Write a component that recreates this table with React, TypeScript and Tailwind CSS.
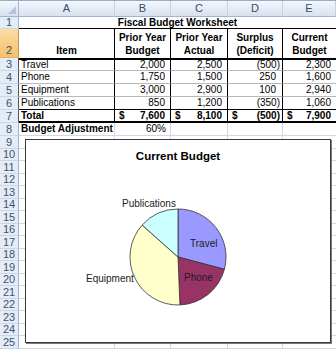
import React from "react";

const font = "font-['Liberation_Sans',Arial,sans-serif]";
const gridCols = "grid grid-cols-[19px_96px_56px_57px_55px_53px]";
const gridLine = "border-r border-b border-[#d0d7e5]";

const items = [
  ["Travel", "2,000", "2,500", "(500)", "2,300"],
  ["Phone", "1,750", "1,500", "250", "1,600"],
  ["Equipment", "3,000", "2,900", "100", "2,940"],
  ["Publications", "850", "1,200", "(350)", "1,060"],
];

const slices = [
  { name: "Travel", v: 2300, fill: "#9999ff" },
  { name: "Phone", v: 1600, fill: "#993366" },
  { name: "Equipment", v: 2940, fill: "#ffffcc" },
  { name: "Publications", v: 1060, fill: "#ccffff" },
];

function RowHead({ n, orange, dark }: { n: number; orange?: boolean; dark?: boolean }) {
  if (orange) {
    return (
      <div className="flex items-end justify-center pb-[1px] bg-gradient-to-b from-[#fbdca4] to-[#f5c16c] border-r border-b border-r-[#c89a55] border-b-[#e2b064] text-[11px] leading-none text-[#3f4f66]">
        {n}
      </div>
    );
  }
  return (
    <div
      className={`flex items-center justify-center bg-[#e4ecf7] border-r border-b border-b-[#cad7e9] text-[11px] leading-none text-[#42536b] ${
        dark ? "border-r-[#555]" : "border-r-[#9eb6ce]"
      }`}
    >
      {n}
    </div>
  );
}

function PieChart() {
  const cx = 152, cy = 117, r = 48;
  const total = slices.reduce((a, s) => a + s.v, 0);
  let acc = 0;
  const paths = slices.map(s => {
    const a0 = (acc / total) * Math.PI * 2;
    acc += s.v;
    const a1 = (acc / total) * Math.PI * 2;
    const x0 = cx + r * Math.sin(a0), y0 = cy - r * Math.cos(a0);
    const x1 = cx + r * Math.sin(a1), y1 = cy - r * Math.cos(a1);
    const large = a1 - a0 > Math.PI ? 1 : 0;
    return { ...s, d: `M${cx},${cy} L${x0},${y0} A${r},${r} 0 ${large} 1 ${x1},${y1} Z` };
  });

  return (
    <svg width="304" height="202" className="absolute left-0 top-0">
      {paths.map(p => (
        <path key={p.name} d={p.d} fill={p.fill} stroke="#333" strokeWidth="0.8" />
      ))}
      <g fontSize="10" fill="#1c1c1c" fontFamily="'Liberation Sans', Arial, sans-serif">
        <text x="96" y="67">Publications</text>
        <text x="60" y="141.5">Equipment</text>
        <text x="164" y="106.5">Travel</text>
        <text x="158" y="140.5">Phone</text>
      </g>
    </svg>
  );
}

export default function App() {
  const emptyRows = Array.from({ length: 17 }, (_, i) => i + 9);

  return (
    <div className={`relative w-[336px] h-[349px] overflow-hidden bg-white text-black ${font}`}>
      {/* column headers */}
      <div className={`${gridCols} h-[17px] border-t border-[#9aabc2]`}>
        <div className="relative bg-gradient-to-b from-[#f4f7fb] to-[#d8e1ee] border-r border-b border-[#9eb6ce]">
          <div className="absolute right-[2px] bottom-[2px] w-0 h-0 border-l-[8px] border-l-transparent border-b-[8px] border-b-[#b4c4d9]" />
        </div>
        {["A", "B", "C", "D", "E"].map(l => (
          <div
            key={l}
            className="flex items-center justify-center bg-gradient-to-b from-[#f4f7fb] to-[#d8e1ee] border-r border-b border-r-[#c3d1e3] border-b-[#9eb6ce] text-[11px] leading-none text-[#3a4d68]"
          >
            {l}
          </div>
        ))}
      </div>

      {/* row 1 - title */}
      <div className={`${gridCols} h-[12px]`}>
        <RowHead n={1} />
        <div className="col-span-5 flex items-center justify-center border-b border-black text-[10px] leading-none font-bold">
          Fiscal Budget Worksheet
        </div>
      </div>

      {/* row 2 - headings */}
      <div className={`${gridCols} h-[29px]`}>
        <RowHead n={2} orange />
        {[["Item"], ["Prior Year", "Budget"], ["Prior Year", "Actual"], ["Surplus", "(Deficit)"], ["Current", "Budget"]].map(
          (lines, i) => (
            <div
              key={i}
              className={`flex flex-col items-center justify-end pb-[1px] text-[10px] leading-[13px] font-bold ${
                i < 4 ? "border-r border-black" : ""
              }`}
            >
              {lines.map(t => (
                <span key={t}>{t}</span>
              ))}
            </div>
          )
        )}
      </div>

      {/* rows 3-6 */}
      {items.map((row, r) => {
        const edge = `${r === 0 ? "border-t-2 border-t-black" : ""} border-b ${
          r === 3 ? "border-b-black" : "border-b-[#b8b8b8]"
        }`;
        return (
          <div key={row[0]} className={`${gridCols} h-[13px]`}>
            <RowHead n={r + 3} dark />
            {row.map((v, c) => {
              const right = c < 4 ? "border-r border-r-black" : "";
              let align = "justify-end pr-[5px]";
              if (c === 0) align = "justify-start pl-[2px]";
              if (c === 3) align = v.startsWith("(") ? "justify-end pr-[2px]" : "justify-end pr-[6px]";
              return (
                <div key={c} className={`flex items-center text-[10px] leading-none whitespace-nowrap ${edge} ${right} ${align}`}>
                  {v}
                </div>
              );
            })}
          </div>
        );
      })}

      {/* row 7 - total */}
      <div className={`${gridCols} h-[13px]`}>
        <RowHead n={7} dark />
        <div className="flex items-center pl-[2px] text-[10px] leading-none font-bold border-r border-b-2 border-black">
          Total
        </div>
        {["7,600", "8,100", "(500)", "7,900"].map((v, i) => (
          <div
            key={v}
            className={`flex items-center justify-between pl-[4px] text-[10px] leading-none font-bold border-b-2 border-black ${
              i < 3 ? "border-r" : ""
            } ${i === 2 ? "pr-[2px]" : "pr-[5px]"}`}
          >
            <span>$</span>
            <span>{v}</span>
          </div>
        ))}
      </div>

      {/* row 8 */}
      <div className={`${gridCols} h-[13px]`}>
        <RowHead n={8} />
        <div className={`flex items-center pl-[2px] text-[10px] leading-none font-bold whitespace-nowrap ${gridLine}`}>
          Budget Adjustment
        </div>
        <div className={`flex items-center justify-end pr-[4px] text-[10px] leading-none ${gridLine}`}>60%</div>
        <div className={gridLine} />
        <div className={gridLine} />
        <div className="border-b border-[#d0d7e5]" />
      </div>

      {/* rows 9-25 */}
      {emptyRows.map(n => (
        <div key={n} className={`${gridCols} ${n % 2 === 1 ? "h-[13px]" : "h-[12px]"}`}>
          <RowHead n={n} />
          <div className={gridLine} />
          <div className={gridLine} />
          <div className={gridLine} />
          <div className={gridLine} />
          <div className="border-b border-[#d0d7e5]" />
        </div>
      ))}

      {/* chart object floating over the sheet */}
      <div className="absolute left-[25px] top-[139px] w-[306px] h-[204px] bg-white border border-[#3a3a3a] shadow-[1px_1px_0_#7a7a7a]">
        <PieChart />
        <div className="relative pt-[10px] text-center text-[11.5px] leading-[12px] font-bold">Current Budget</div>
      </div>
    </div>
  );
}
